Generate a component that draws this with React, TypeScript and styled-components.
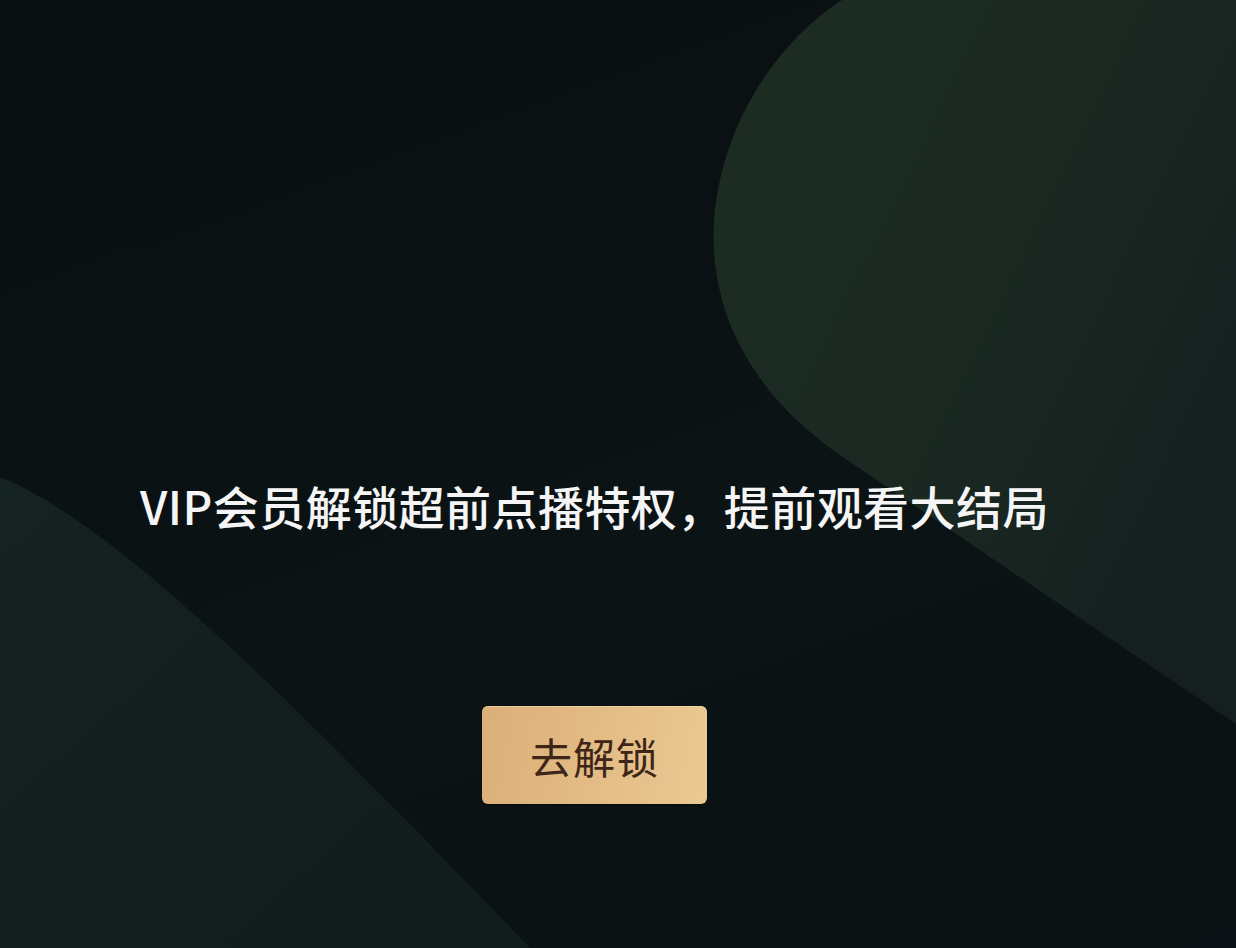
import styled, { createGlobalStyle } from 'styled-components'

const GlobalStyle = createGlobalStyle`
  html, body {
    margin: 0;
    padding: 0;
    background: #0a1013;
  }
  * {
    box-sizing: border-box;
  }
`

const Stage = styled.div`
  position: relative;
  width: 100%;
  min-height: 100vh;
  overflow: hidden;
  background: linear-gradient(160deg, #090e11 0%, #0b1315 55%, #0a1114 100%);
  font-family: "Noto Sans CJK SC", "Noto Sans", sans-serif;
`

// decorative backdrop shapes behind the unlock prompt
const Backdrop = styled.svg`
  position: absolute;
  inset: 0;
  width: 100%;
  height: 100%;
  z-index: 0;
`

const Content = styled.div`
  position: relative;
  z-index: 1;
  display: flex;
  flex-direction: column;
  align-items: center;
  padding: 482px 47px 0 0;
`

const Title = styled.div`
  color: #f5f5f5;
  font-size: 46px;
  line-height: 46px;
  font-weight: 500;
  letter-spacing: 0.45px;
  white-space: nowrap;
`

const UnlockButton = styled.button`
  margin-top: 178px;
  width: 225px;
  height: 98px;
  border: none;
  border-radius: 6px;
  background: linear-gradient(100deg, #dcaf78 0%, #e3bb85 50%, #ebc993 100%);
  box-shadow: inset 0 1px 0 rgba(255, 236, 200, 0.45), 0 1px 2px rgba(0, 0, 0, 0.4);
  color: #3d2617;
  font-family: inherit;
  font-size: 42px;
  font-weight: 400;
  letter-spacing: 1px;
  cursor: pointer;
`

const App = () => {
  return (
    <Stage>
      <GlobalStyle />
      <Backdrop viewBox="0 0 1236 948" preserveAspectRatio="none">
        <defs>
          <linearGradient id="blobRight" gradientUnits="userSpaceOnUse" x1="720" y1="250" x2="1236" y2="500">
            <stop offset="0" stopColor="#1c2c23" />
            <stop offset="0.5" stopColor="#1a2822" />
            <stop offset="1" stopColor="#141f1e" />
          </linearGradient>
          <linearGradient id="blobLeft" gradientUnits="userSpaceOnUse" x1="0" y1="500" x2="400" y2="948">
            <stop offset="0" stopColor="#152222" />
            <stop offset="1" stopColor="#111c1c" />
          </linearGradient>
        </defs>
        <path
          d="M 842 0 C 780 40 722 120 714 220 C 708 320 760 400 840 455 L 1236 724 L 1236 0 Z"
          fill="url(#blobRight)"
        />
        <path d="M 0 477 C 120 525 310 720 530 948 L 0 948 Z" fill="url(#blobLeft)" />
      </Backdrop>
      <Content>
        <Title>VIP会员解锁超前点播特权，提前观看大结局</Title>
        <UnlockButton>去解锁</UnlockButton>
      </Content>
    </Stage>
  )
}

export default App
